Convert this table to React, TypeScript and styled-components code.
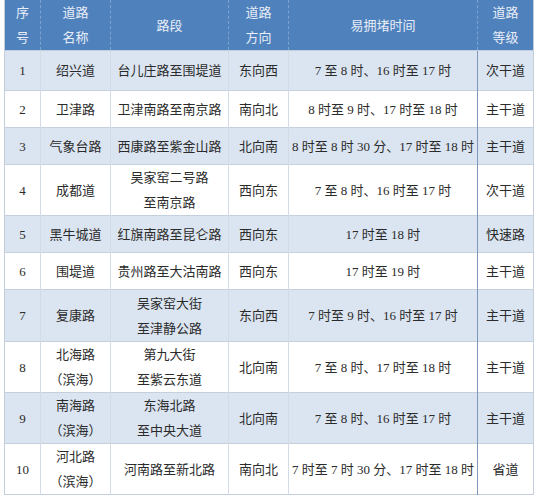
import styled, { createGlobalStyle } from 'styled-components';

const GlobalStyle = createGlobalStyle`
  html, body {
    margin: 0;
    padding: 0;
    background: #ffffff;
  }
`;

const Page = styled.div`
  padding: 0 0 0 4px;
  width: 539px;
  height: 500px;
  overflow: hidden;
  box-sizing: border-box;
`;

const Table = styled.table`
  width: 529px;
  table-layout: fixed;
  border-collapse: collapse;
  font-family: "Liberation Serif", "Noto Sans CJK SC", serif;
  font-size: 13px;
  color: #2b2b2b;
  border: 1px solid #c3cedb;
  border-top: none;
`;

const HeadCell = styled.th`
  background: #4f81bd;
  color: #e8eef7;
  font-weight: normal;
  text-align: center;
  line-height: 25px;
  height: 50px;
  padding: 0;
  border-left: 1px dashed #7fa3d1;
  &:first-child {
    border-left: none;
  }
`;

const Row = styled.tr<{ $alt: boolean; $h: number }>`
  background: ${(p) => (p.$alt ? '#dbe5f1' : '#ffffff')};
  height: ${(p) => p.$h}px;
`;

const Cell = styled.td<{ $strong?: boolean }>`
  text-align: center;
  padding: 0;
  line-height: 25px;
  border-top: 1px solid #c5d0de;
  border-left: 1px ${(p) => (p.$strong ? 'solid #7f97bd' : 'solid #d3dbe6')};
  &:first-child {
    border-left: none;
  }
`;

type Item = {
  no: string;
  name: string[];
  section: string[];
  dir: string;
  time: string;
  level: string;
  h: number;
};

const rows: Item[] = [
  { no: '1', name: ['绍兴道'], section: ['台儿庄路至围堤道'], dir: '东向西', time: '7 至 8 时、16 时至 17 时', level: '次干道', h: 40 },
  { no: '2', name: ['卫津路'], section: ['卫津南路至南京路'], dir: '南向北', time: '8 时至 9 时、17 时至 18 时', level: '主干道', h: 37 },
  { no: '3', name: ['气象台路'], section: ['西康路至紫金山路'], dir: '北向南', time: '8 时至 8 时 30 分、17 时至 18 时', level: '主干道', h: 37 },
  { no: '4', name: ['成都道'], section: ['吴家窑二号路', '至南京路'], dir: '西向东', time: '7 至 8 时、16 时至 17 时', level: '次干道', h: 49 },
  { no: '5', name: ['黑牛城道'], section: ['红旗南路至昆仑路'], dir: '西向东', time: '17 时至 18 时', level: '快速路', h: 37 },
  { no: '6', name: ['围堤道'], section: ['贵州路至大沽南路'], dir: '西向东', time: '17 时至 19 时', level: '主干道', h: 37 },
  { no: '7', name: ['复康路'], section: ['吴家窑大街', '至津静公路'], dir: '东向西', time: '7 时至 9 时、16 时至 17 时', level: '主干道', h: 52 },
  { no: '8', name: ['北海路', '（滨海）'], section: ['第九大街', '至紫云东道'], dir: '北向南', time: '7 至 8 时、17 时至 18 时', level: '主干道', h: 51 },
  { no: '9', name: ['南海路', '（滨海）'], section: ['东海北路', '至中央大道'], dir: '北向南', time: '7 至 8 时、16 时至 17 时', level: '主干道', h: 51 },
  { no: '10', name: ['河北路', '（滨海）'], section: ['河南路至新北路'], dir: '南向北', time: '7 时至 7 时 30 分、17 时至 18 时', level: '省道', h: 47 },
];

const Lines = ({ items }: { items: string[] }) => (
  <>
    {items.map((t, i) => (
      <div key={i}>{t}</div>
    ))}
  </>
);

export default function App() {
  return (
    <Page>
      <GlobalStyle />
      <Table>
        <colgroup>
          <col style={{ width: 36 }} />
          <col style={{ width: 70 }} />
          <col style={{ width: 118 }} />
          <col style={{ width: 60 }} />
          <col style={{ width: 189 }} />
          <col style={{ width: 56 }} />
        </colgroup>
        <thead>
          <tr>
            <HeadCell>序<br />号</HeadCell>
            <HeadCell>道路<br />名称</HeadCell>
            <HeadCell>路段</HeadCell>
            <HeadCell>道路<br />方向</HeadCell>
            <HeadCell>易拥堵时间</HeadCell>
            <HeadCell>道路<br />等级</HeadCell>
          </tr>
        </thead>
        <tbody>
          {rows.map((r, i) => (
            <Row key={r.no} $alt={i % 2 === 0} $h={r.h}>
              <Cell>{r.no}</Cell>
              <Cell><Lines items={r.name} /></Cell>
              <Cell><Lines items={r.section} /></Cell>
              <Cell>{r.dir}</Cell>
              <Cell>{r.time}</Cell>
              <Cell $strong>{r.level}</Cell>
            </Row>
          ))}
        </tbody>
      </Table>
    </Page>
  );
}
